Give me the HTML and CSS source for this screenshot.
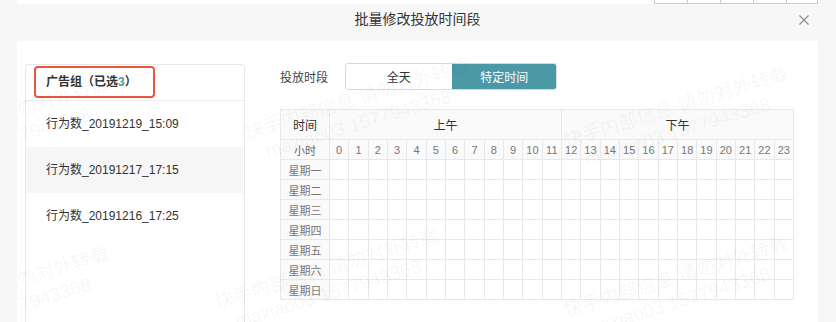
FILE: index.html
```html
<!DOCTYPE html>
<html lang="zh">
<head>
<meta charset="utf-8">
<title>批量修改投放时间段</title>
<link rel="stylesheet" href="styles.css">
</head>
<body>
<div class="modal">
  <div class="ghost">
    <span class="ghost-cell"></span><span class="ghost-cell"></span><span class="ghost-cell"></span><span class="ghost-cell"></span><span class="ghost-cell"></span>
  </div>
  <div class="header">
    <span class="spacer"></span>
    <span class="title">批量修改投放时间段</span>
    <span class="close">
      <svg width="10" height="10" viewBox="0 0 10 10"><path d="M0.5 0.5 L9.5 9.5 M9.5 0.5 L0.5 9.5" stroke="#8c8c8c" stroke-width="1.2" fill="none"/></svg>
    </span>
  </div>
  <div class="content">
    <div class="panel">
      <div class="panel-head">广告组（已选<span class="num">3</span>）<span class="mark"></span></div>
      <div class="item">行为数_20191219_15:09</div>
      <div class="item alt">行为数_20191217_17:15</div>
      <div class="item">行为数_20191216_17:25</div>
    </div>
    <div class="right">
      <div class="seg-row">
        <span class="label">投放时段</span>
        <div class="seg">
          <span class="seg-btn">全天</span>
          <span class="seg-btn active">特定时间</span>
        </div>
      </div>
      <div class="grid" id="grid">
        <div class="cell head corner">时间</div>
        <div class="cell head half">上午</div>
        <div class="cell head half">下午</div>
        <div class="cell sub">小时</div>
      </div>
    </div>
  </div>
  <div class="wm">
    <div class="wm-item wm-1">快手内部信息 请勿对外转载<br><span class="wm-id">maxiao03 1577943368</span></div>
    <div class="wm-item wm-2">快手内部信息 请勿对外转载<br><span class="wm-id">maxiao03 1577943368</span></div>
    <div class="wm-item wm-3">快手内部信息 请勿对外转载<br><span class="wm-id">maxiao03 1577943368</span></div>
    <div class="wm-item wm-4">快手内部信息 请勿对外转载<br><span class="wm-id">maxiao03 1577943368</span></div>
    <div class="wm-item wm-5">快手内部信息 请勿对外转载<br><span class="wm-id">maxiao03 1577943368</span></div>
    <div class="wm-item wm-6">快手内部信息 请勿对外转载<br><span class="wm-id">maxiao03 1577943368</span></div>
  </div>
</div>
<script src="script.js"></script>
</body>
</html>
```
FILE: script.js
```js
(function () {
  var grid = document.getElementById('grid');
  var html = '';
  for (var h = 0; h < 24; h++) {
    html += '<div class="cell sub num-cell">' + h + '</div>';
  }
  var days = ['星期一', '星期二', '星期三', '星期四', '星期五', '星期六', '星期日'];
  for (var d = 0; d < days.length; d++) {
    html += '<div class="cell day">' + days[d] + '</div>';
    for (var k = 0; k < 24; k++) {
      html += '<div class="cell slot"></div>';
    }
  }
  grid.insertAdjacentHTML('beforeend', html);
})();
```
FILE: styles.css
```css
* { box-sizing: border-box; }
html, body { margin: 0; padding: 0; }
body {
  background: #f6f6f6;
  font-family: "Liberation Sans", "Noto Sans CJK SC", sans-serif;
  color: #333;
  width: 836px;
  height: 322px;
  overflow: hidden;
}
.modal {
  position: relative;
  margin-left: 17px;
  width: 801px;
  height: 322px;
  background: #fff;
  overflow: hidden;
}
.ghost {
  height: 4px;
  display: flex;
  padding-left: 637px;
}
.ghost-cell {
  width: 33px;
  height: 4px;
  border-left: 1px solid #c9cfcf;
  border-bottom: 1px solid #c9cfcf;
}
.ghost-cell:last-child { width: 32px; border-right: 1px solid #c9cfcf; }
.header {
  height: 37px;
  background: #f7f7f7;
  display: grid;
  grid-template-columns: 1fr auto 1fr;
  padding-top: 5px;
}
.title {
  font-size: 14px;
  line-height: 20px;
  color: #333;
}
.close {
  justify-self: end;
  margin-right: 9px;
  padding-top: 6px;
  line-height: 0;
}
.content {
  display: flex;
  padding: 22px 0 0 8px;
}
.panel {
  position: relative;
  width: 220px;
  height: 280px;
  margin-top: 1px;
  border: 1px solid #e8e8e8;
  border-radius: 3px;
}
.panel-head {
  position: relative;
  height: 36px;
  line-height: 34px;
  padding-left: 20px;
  font-size: 12px;
  font-weight: bold;
  color: #333;
  border-bottom: 1px solid #ececec;
}
.num { color: #4b98a7; }
.mark {
  position: absolute;
  left: 8px;
  top: 1px;
  width: 121px;
  height: 32px;
  border: 2px solid #e9563e;
  border-radius: 4px;
}
.item {
  height: 46px;
  line-height: 46px;
  padding-left: 20px;
  font-size: 12px;
  color: #333;
}
.item.alt { background: #f6f6f7; }
.right {
  margin-left: 35px;
}
.seg-row {
  display: flex;
  align-items: center;
  gap: 17px;
}
.label {
  font-size: 12px;
  color: #444;
}
.seg {
  display: flex;
  width: 212px;
  height: 27px;
  border: 1px solid #d9d9d9;
  border-radius: 3px;
  overflow: hidden;
}
.seg-btn {
  flex: 1;
  display: flex;
  align-items: center;
  justify-content: center;
  font-size: 12px;
  color: #333;
  background: #fff;
}
.seg-btn.active {
  background: #4b98a7;
  color: #fff;
  margin: -1px -1px -1px 0;
}
.grid {
  margin-top: 19px;
  width: 514px;
  display: grid;
  grid-template-columns: 48px repeat(24, 1fr);
  grid-template-rows: 29px 19px repeat(7, 19px);
  gap: 1px;
  border: 1px solid #e7e7ee;
  background: #e7e7ee;
}
.cell {
  background: #fff;
  display: flex;
  align-items: center;
  justify-content: center;
  font-size: 11px;
  color: #777;
}
.head {
  background: #fafafa;
  font-size: 12px;
  color: #333;
}
.corner { grid-column: 1; }
.half { grid-column: span 12; }
.sub {
  background: #fafafa;
  font-size: 11px;
  color: #666;
}
.num-cell { font-size: 11px; color: #777; }
.day {
  background: #fafafa;
  font-size: 11px;
  color: #777;
}
.wm {
  position: absolute;
  inset: 0;
  pointer-events: none;
}
.wm-item {
  position: absolute;
  white-space: nowrap;
  font-size: 19px;
  line-height: 24px;
  color: rgba(0, 0, 0, 0.05);
  transform: rotate(-17deg);
  transform-origin: 0 0;
}
.wm-id { padding-left: 14px; }
.wm-1 { left: -135px; top: 140px; }
.wm-2 { left: -135px; top: 310px; }
.wm-3 { left: 225px; top: 122px; }
.wm-4 { left: 195px; top: 292px; }
.wm-5 { left: 544px; top: 130px; }
.wm-6 { left: 544px; top: 300px; }
```
